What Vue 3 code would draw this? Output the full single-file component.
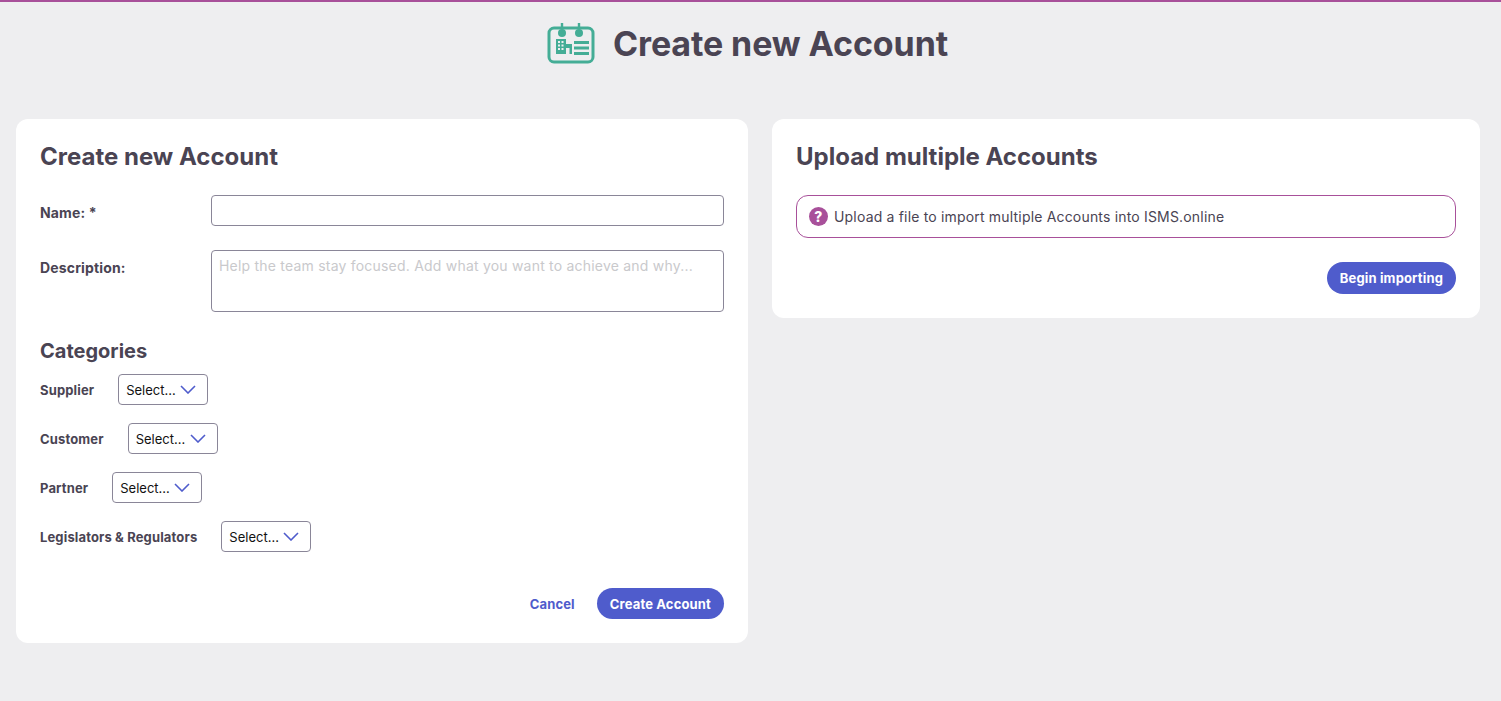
<script setup>
const categories = [
  { name: 'Supplier' },
  { name: 'Customer' },
  { name: 'Partner' },
  { name: 'Legislators & Regulators' }
]
</script>

<template>
  <div class="page">
    <header class="page-header">
      <svg class="page-icon" width="48" height="41" viewBox="0 0 48 41" fill="none">
        <rect x="2" y="5" width="44" height="34" rx="5" stroke="#44ad96" stroke-width="3" />
        <path d="M15 0v6M32 0v6" stroke="#44ad96" stroke-width="2.4" />
        <circle cx="15" cy="10" r="4" fill="#44ad96" />
        <circle cx="32" cy="10" r="4" fill="#44ad96" />
        <path fill-rule="evenodd" d="M9 16h10v5h6v10h-2.500v-6h-3.500v6H9V16zm2 2v2h2v-2h-2zm3.500 0v2h2v-2h-2zM11 21.500v2h2v-2h-2zm3.500 0v2h2v-2h-2zM11 25v2h2v-2h-2zm3.500 0v2h2v-2h-2z" fill="#44ad96" />
        <path d="M27 19.500h15M27 25h15M27 30.500h15" stroke="#44ad96" stroke-width="2.800" />
      </svg>
      <h1>Create new Account</h1>
    </header>

    <main class="columns">
      <section class="card">
        <h2>Create new Account</h2>
        <div class="field">
          <label>Name: *</label>
          <input type="text" />
        </div>
        <div class="field">
          <label>Description:</label>
          <textarea placeholder="Help the team stay focused. Add what you want to achieve and why..."></textarea>
        </div>

        <h3>Categories</h3>
        <div class="categories">
          <div v-for="cat in categories" :key="cat.name" class="category">
            <span class="cat-label">{{ cat.name }}</span>
            <div class="select">
              <span>Select...</span>
              <svg width="16" height="9" viewBox="0 0 16 9" fill="none">
                <path d="M1 1l7 7 7-7" stroke="#4f5ccc" stroke-width="1.6" />
              </svg>
            </div>
          </div>
        </div>

        <div class="actions">
          <a class="link">Cancel</a>
          <button class="btn">Create Account</button>
        </div>
      </section>

      <section class="card card-upload">
        <h2>Upload multiple Accounts</h2>
        <div class="notice">
          <span class="help">?</span>
          <span>Upload a file to import multiple Accounts into ISMS.online</span>
        </div>
        <div class="actions upload-actions">
          <button class="btn btn-tall">Begin importing</button>
        </div>
      </section>
    </main>
  </div>
</template>

<style>
html,
body {
  margin: 0;
  background: #eeeef0;
}
</style>

<style scoped>
.page {
  min-height: 701px;
  box-sizing: border-box;
  border-top: 2px solid #a8509a;
  background: #eeeef0;
  font-family: Inter, "Liberation Sans", sans-serif;
  color: #4a4453;
}

.page-header {
  height: 118px;
  margin-bottom: -1px;
  display: flex;
  justify-content: center;
  align-items: flex-start;
  padding-top: 21px;
  box-sizing: border-box;
  gap: 18px;
  padding-right: 6px;
}

h1 {
  margin: 0;
  font-size: 34px;
  line-height: 42px;
  font-weight: 650;
  letter-spacing: -0.11px;
}

.columns {
  display: grid;
  grid-template-columns: 732px 708px;
  gap: 24px;
  padding: 0 21px 0 16px;
  align-items: start;
}

.card {
  background: #fff;
  border-radius: 12px;
  padding: 24px;
  height: 524px;
  box-sizing: border-box;
}

.card-upload {
  height: 199px;
}

h2 {
  margin: 0 0 25px;
  font-size: 24px;
  line-height: 27px;
  font-weight: 650;
}

.field {
  display: flex;
  margin-bottom: 24px;
}

.field label {
  width: 171px;
  height: 31px;
  flex-shrink: 0;
  font-size: 14px;
  font-weight: 700;
  line-height: 36px;
  letter-spacing: 0.15px;
}

input,
textarea {
  flex: 1;
  box-sizing: border-box;
  height: 31px;
  border: 1px solid #8a8698;
  border-radius: 4px;
  background: #fff;
  font-family: inherit;
  font-size: 14px;
  padding: 6px 7px;
  outline: none;
  resize: none;
}

textarea {
  height: 62px;
  letter-spacing: 0.21px;
}

textarea::placeholder {
  color: #c9c9cc;
  opacity: 1;
}

h3 {
  margin: 27px 0 11px;
  font-size: 20px;
  line-height: 24px;
  font-weight: 650;
}

.category {
  display: flex;
  align-items: center;
  gap: 24px;
  margin-bottom: 18px;
}

.cat-label {
  font-size: 13px;
  font-weight: 700;
  letter-spacing: 0.14px;
}

.select {
  width: 90px;
  height: 31px;
  box-sizing: border-box;
  border: 1px solid #8a8698;
  border-radius: 4px;
  display: flex;
  align-items: center;
  justify-content: space-between;
  padding: 0 11px 0 7px;
  font-size: 13px;
  color: #111;
}

.actions {
  display: flex;
  justify-content: flex-end;
  align-items: center;
  gap: 22px;
  margin-top: 36px;
}

.link {
  font-size: 13px;
  font-weight: 700;
  color: #4f5ccc;
  letter-spacing: 0.15px;
}

.btn {
  border: none;
  height: 31px;
  padding: 0 13px;
  border-radius: 16px;
  background: #4f5ccc;
  color: #fff;
  font-family: inherit;
  font-size: 13px;
  font-weight: 700;
  letter-spacing: 0.15px;
}

.btn-tall {
  height: 32px;
}

.notice {
  height: 43px;
  box-sizing: border-box;
  display: flex;
  align-items: center;
  gap: 6px;
  padding: 0 12px;
  border: 1px solid #a8509a;
  border-radius: 12px;
  font-size: 14px;
  letter-spacing: 0.18px;
}

.help {
  width: 19px;
  height: 19px;
  border-radius: 50%;
  background: #a8509a;
  color: #fff;
  font-size: 14px;
  font-weight: 800;
  display: flex;
  align-items: center;
  justify-content: center;
}

.upload-actions {
  margin-top: 24px;
}
</style>
